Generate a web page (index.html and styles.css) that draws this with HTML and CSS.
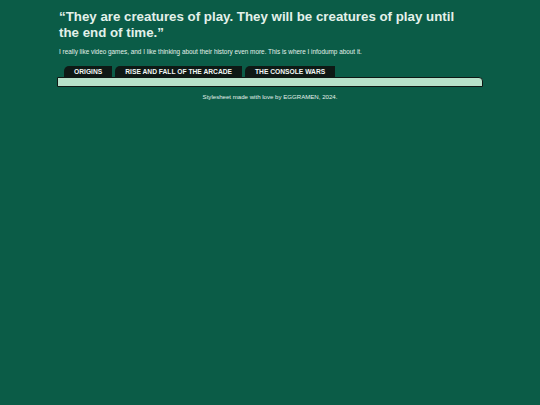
FILE: index.html
```html
<!DOCTYPE html>
<html>
<head>
<meta charset="utf-8">
<link rel="stylesheet" href="styles.css">
</head>
<body>
<div class="page">
  <header class="head">
    <h1 class="title">“They are creatures of play. They will be creatures of play until the end of time.”</h1>
    <p class="intro">I really like video games, and I like thinking about their history even more. This is where I infodump about it.</p>
  </header>
  <nav class="tabs">
    <a class="tab">ORIGINS</a>
    <a class="tab">RISE AND FALL OF THE ARCADE</a>
    <a class="tab">THE CONSOLE WARS</a>
  </nav>
  <div class="bar"></div>
  <footer class="foot">Stylesheet made with love by EGGRAMEN, 2024.</footer>
</div>
</body>
</html>
```
FILE: styles.css
```css
html, body {
  margin: 0;
  padding: 0;
  background: #0b5c47;
}
body {
  font-family: "Liberation Sans", Arial, sans-serif;
  color: #e3f1ea;
}
.page {
  width: 426px;
  margin: 0 auto;
  padding-top: 9px;
}
.head {
  padding: 0 2px;
}
.title {
  margin: 0;
  max-width: 410px;
  font-size: 13.3px;
  line-height: 15.5px;
  font-weight: bold;
}
.intro {
  margin: 8px 0 0;
  font-size: 6.4px;
  line-height: 8px;
}
.tabs {
  display: flex;
  gap: 3px;
  padding-left: 7px;
  margin-top: 10px;
}
.tab {
  background: #0e1915;
  color: #f2f7f4;
  font-size: 6.7px;
  font-weight: bold;
  line-height: 11px;
  height: 11px;
  padding: 0 10px;
  border-top-left-radius: 5px;
}
.bar {
  height: 8px;
  background: #b7e2ca;
  border: 1px solid #0e1915;
  border-top-right-radius: 4px;
}
.foot {
  text-align: center;
  font-size: 6.1px;
  margin-top: 6px;
}
```
